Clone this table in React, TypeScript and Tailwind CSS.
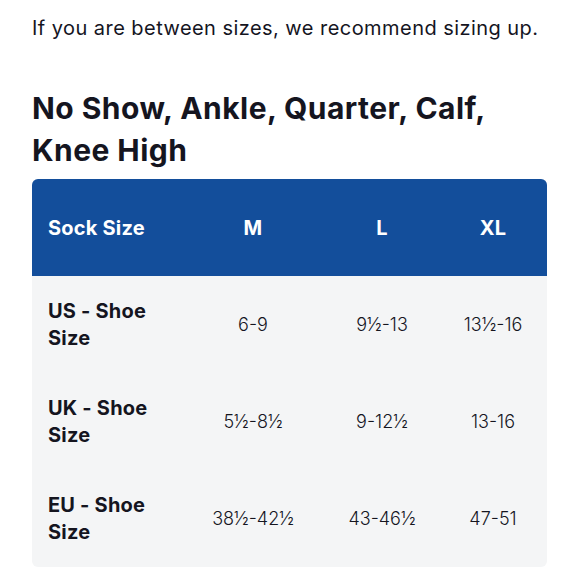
import React from "react";

const rows = [
  { label: ["US - Shoe", "Size"], vals: ["6-9", "9½-13", "13½-16"] },
  { label: ["UK - Shoe", "Size"], vals: ["5½-8½", "9-12½", "13-16"] },
  { label: ["EU - Shoe", "Size"], vals: ["38½-42½", "43-46½", "47-51"] },
];

const cols = "grid grid-cols-[160px_122px_136px_86px] pr-[11px]";

export default function App() {
  return (
    <div className="w-[580px] h-[580px] bg-white overflow-hidden text-[#15151f]" style={{ fontFamily: "Inter, 'Noto Sans', sans-serif" }}>
      <div className="pl-[32px] pr-[33px]">
        <p className="pt-[13px] text-[20px] leading-[30px] tracking-[0.45px]">If you are between sizes, we recommend sizing up.</p>
        <h2 className="mt-[44px] text-[30px] leading-[42px] font-bold tracking-[0.45px]">No Show, Ankle, Quarter, Calf,<br />Knee High</h2>
        <div className="mt-[8px] rounded-[6px] overflow-hidden bg-[#f4f5f6]">
          <div className={`${cols} bg-[#134e9b] h-[97px] items-center text-white text-[20px] font-bold tracking-[0.2px]`}>
            <div className="pl-[16px]">Sock Size</div>
            <div className="text-center">M</div>
            <div className="text-center">L</div>
            <div className="text-center">XL</div>
          </div>
          {rows.map((r) => (
            <div key={r.label[0]} className={`${cols} h-[97px] items-center`}>
              <div className="pl-[16px] text-[20px] leading-[27px] font-bold tracking-[0.2px]">
                {r.label[0]}
                <br />
                {r.label[1]}
              </div>
              {r.vals.map((v) => (
                <div key={v} className="text-center text-[18px] font-light">{v}</div>
              ))}
            </div>
          ))}
        </div>
      </div>
    </div>
  );
}
